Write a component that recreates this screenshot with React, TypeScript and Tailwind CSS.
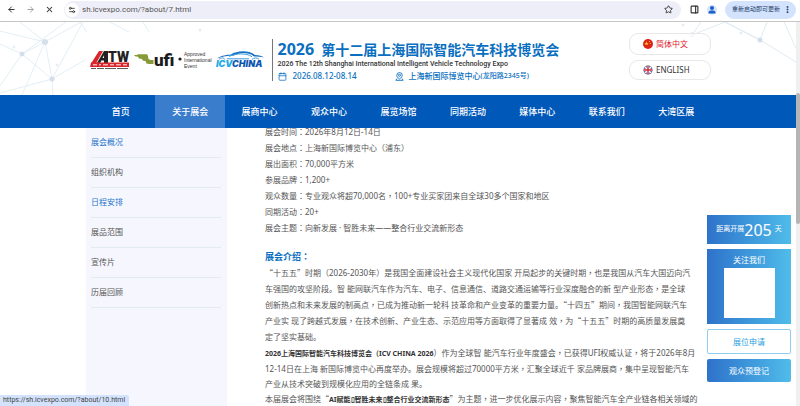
import { ArrowLeft, ArrowRight, Calendar, EllipsisVertical, PanelRight, Settings2, Star, X } from "lucide-react";

const NAV = [
  "首页",
  "关于展会",
  "展商中心",
  "观众中心",
  "展览场馆",
  "同期活动",
  "媒体中心",
  "联系我们",
  "大湾区展",
];

const SIDE = [
  { label: "展会概况", active: true },
  { label: "组织机构", active: false },
  { label: "日程安排", active: true },
  { label: "展品范围", active: false },
  { label: "宣传片", active: false },
  { label: "历届回顾", active: false },
];

const FACTS = [
  "展会时间：2026年8月12日-14日",
  "展会地点：上海新国际博览中心（浦东）",
  "展出面积：70,000平方米",
  "参展品牌：1,200+",
  "观众数量：专业观众将超70,000名，100+专业买家团来自全球30多个国家和地区",
  "同期活动：20+",
  "展会主题：向新发展 · 智胜未来——整合行业交流新形态",
];

const INTRO = [
  "“十五五”时期（2026-2030年）是我国全面建设社会主义现代化国家 开局起步的关键时期，也是我国从汽车大国迈向汽",
  "车强国的攻坚阶段。智 能网联汽车作为汽车、电子、信息通信、道路交通运输等行业深度融合的新 型产业形态，是全球",
  "创新热点和未来发展的制高点，已成为推动新一轮科 技革命和产业变革的重要力量。“十四五”期间，我国智能网联汽车",
  "产业实 现了跨越式发展，在技术创新、产业生态、示范应用等方面取得了显著成 效，为“十五五”时期的高质量发展奠",
  "定了坚实基础。",
];

// Full-width quotes, and colons and commas centred in their cell
function Cjk({ text }: { text: string }) {
  return text.split(/([“”：，])/).map((part, i) => {
    if (part === "“" || part === "”") {
      return <span key={i} className="font-['Noto_Sans_CJK_SC',sans-serif]">{part}</span>;
    }
    if (part === "：" || part === "，") {
      return <span key={i} lang="zh-TW" className="font-['Noto_Sans_CJK_TC',sans-serif]">{part}</span>;
    }
    return part;
  });
}

function BrowserBar() {
  return (
    <div className="flex h-[22px] shrink-0 items-center border-b border-[#c6c6c6] bg-white pb-0.5 text-[#333]">
      <div className="flex w-[64px] items-center justify-between pr-[10px] pl-[7px]">
        <button aria-label="Back"><ArrowLeft size={9} strokeWidth={2.6} /></button>
        <button aria-label="Forward" className="text-[#999]"><ArrowRight size={9} strokeWidth={2.4} /></button>
        <button aria-label="Stop"><X size={9} strokeWidth={2.8} /></button>
      </div>
      <div className="flex h-[18px] flex-1 items-center rounded-full bg-[#eeeef8] pr-2 pl-px">
        <span className="flex size-[14px] items-center justify-center rounded-full bg-white">
          <Settings2 size={8} strokeWidth={2.6} />
        </span>
        <input
          aria-label="Address"
          defaultValue="sh.icvexpo.com/?about/7.html"
          className="ml-[3px] min-w-0 flex-1 bg-transparent font-[Roboto] text-[8px] text-[#555] outline-none"
        />
        <button aria-label="Bookmark"><Star size={9} strokeWidth={2.4} /></button>
      </div>
      <div className="flex items-center gap-2 pr-1 pl-[9px]">
        <button aria-label="Side panel"><PanelRight size={9} strokeWidth={3} /></button>
        <button aria-label="Profile" className="flex size-[10px] items-center justify-center rounded-full bg-[#d3e3fd]">
          <svg viewBox="0 0 10 10" className="size-[10px]" fill="#1a5fc8">
            <circle cx="5" cy="3" r="2" />
            <path d="M1.5 8.5V7.4C1.5 5.8 3.6 5.5 5 5.5s3.5.3 3.5 1.9v1.1z" />
          </svg>
        </button>
        <button className="flex h-[18px] items-center gap-[3px] rounded-full bg-[#d3e3fd] pr-1 pl-[7px] text-[6px] whitespace-nowrap text-[#223b66]">
          重新启动即可更新
          <EllipsisVertical size={9} strokeWidth={3} />
        </button>
      </div>
    </div>
  );
}

function AtwLogo() {
  return (
    <svg viewBox="0 0 40 20" className="h-[20px] w-[40px] shrink-0 overflow-visible">
      <path d="M1 13.500 9 1h4L6 13.500z" fill="#d8262c" />
      <path d="M7 13 14 1h4v12h-4v-2.500h-2.500L10 13zM12.500 8H14V5.200z" fill="#222" fillRule="evenodd" />
      <text x="18" y="11.500" fontSize="14" fontWeight="900" fill="#222" fontFamily="Roboto, sans-serif">TW</text>
      <path d="M1 12.500h38v4.500H0z" fill="#d8262c" />
      <path d="M3 14.800h4m2 0h2m2 0h5m2 0h4m2 0h5m2 0h4" stroke="#fff" strokeOpacity=".65" strokeWidth="1.500" />
      <path d="M1 18.500h5m1 0h7m1 0h11m1 0h11" stroke="#333" strokeWidth="1.200" strokeOpacity=".8" />
    </svg>
  );
}

function UfiLogo() {
  return (
    <div className="flex shrink-0 items-center">
      <svg viewBox="0 0 50 26" className="h-[26px] w-[50px] overflow-visible">
        <path d="M0 8h3l1-.8h9l.8 1.400.7 3.400 2 1h3v4h-4.300l-2.700-.6-1-2.400-2.500-.3-1-1.700-3-.4-1-1.800-3-.5z" fill="#869a3a" />
        <text x="20" y="19" fontSize="17" fontWeight="900" fill="#1b1b1b" fontFamily="Roboto, sans-serif">ufi</text>
        <circle cx="46" cy="12" r="1.600" fill="#1b1b1b" />
      </svg>
      <p className="font-['Liberation_Sans'] text-[5px] leading-[6px] text-[#333]">
        Approved
        <br />
        International
        <br />
        Event
      </p>
    </div>
  );
}

function IcvLogo() {
  return (
    <svg viewBox="0 0 50 20" className="h-[20px] w-[50px] shrink-0 overflow-visible">
      <path d="M1 8.500C6 5 11 5 15 4.500 20 1 32-.5 39 5c4 .4 7 1 9 2.500-3-.9-7-1-10-1C32 1.800 23 2.500 18 5.600 12 6 6 6.500 1 8.500z" fill="#1670c4" />
      <path d="M13 6.500c5-3 18-4 23 .3M3 9.500c2-2 5-2 6 0M36 9.500c2-2 5-2 7-.3M11 8.800h22" fill="none" stroke="#3d9be0" strokeWidth="1" />
      <text x="0" y="17" fontSize="9" fontWeight="900" fontStyle="italic" fontFamily="Inter, sans-serif">
        <tspan fill="#20a8e8">ICV</tspan>
        <tspan fill="#0d56b0">CHINA</tspan>
      </text>
    </svg>
  );
}

function VenueIcon() {
  return (
    <svg viewBox="0 0 9 9" className="size-[9px]" fill="none" stroke="currentColor" strokeWidth=".9">
      <path d="M4.500 7C2.600 5.700 1.800 4.600 1.800 3.300a2.700 2.700 0 0 1 5.400 0C7.200 4.600 6.400 5.700 4.500 7z" />
      <circle cx="4.500" cy="3.300" r="1" />
      <path d="M2 6.500.9 8.300h7.200L7 6.500" />
    </svg>
  );
}

function Mesh() {
  return (
    <>
      <svg viewBox="0 0 210 73" className="absolute top-0 left-0 h-[73px] w-[210px]" fill="none">
        <path
          d="M0 9 45 20 22 32 0 22M20 0l25 20L81 0M45 20l7 37L22 32 0 64M45 20 22 73M22 32 66 0M52 57l31-57M52 57l33-19M52 57 0 71M52 57l1 16M80 0l7 10M110 0l19 10M143 0l6 10"
          stroke="#dcebf2"
          strokeWidth=".8"
        />
        <g fill="#d5dfec">
          <circle cx="45" cy="20" r="3" />
          <circle cx="22" cy="32" r="2.500" />
          <circle cx="52" cy="57" r="2.500" />
          <circle cx="200" cy="8" r="1.500" opacity=".6" />
          <circle cx="14" cy="25" r="1.500" opacity=".5" />
          <circle cx="57" cy="43" r="1.500" opacity=".5" />
        </g>
      </svg>
      <svg viewBox="0 0 116 73" className="absolute top-0 right-0 h-[73px] w-[116px]" fill="none">
        <path d="M12 13 21 0M12 13 45 0l35 18 36 22M80 18l7-18M104 0l12 26M80 18 45 0" stroke="#dbe9ef" strokeWidth=".9" />
        <g fill="#d3deea">
          <circle cx="12" cy="13" r="2.500" />
          <circle cx="80" cy="18" r="2.500" />
          <circle cx="3" cy="3" r="1.500" opacity=".6" />
          <circle cx="61" cy="11" r="1.500" opacity=".6" />
        </g>
      </svg>
    </>
  );
}

function SiteHeader() {
  return (
    <header className="relative h-[73px] shrink-0 bg-white">
      <Mesh />
      <div className="relative flex pr-[85px] pl-[90px]">
        <div className="flex h-[76px] items-center gap-1">
          <AtwLogo />
          <UfiLogo />
          <IcvLogo />
        </div>
        <div className="mt-[17px] ml-[6px] h-[42px] border-l border-[#777] pl-[5px] whitespace-nowrap text-[#0a6fc0]">
          <h1 className="flex items-baseline gap-[7px] text-[14px] leading-[20px] font-bold">
            <span className="text-[16px]">2026</span>
            <span>第十二届上海国际智能汽车科技博览会</span>
          </h1>
          <p className="font-[Roboto] text-[7px] leading-[8px] font-medium text-[#333]">
            2026 The 12th Shanghai International Intelligent Vehicle Technology Expo
          </p>
          <div className="flex items-center text-[8px] leading-[16px] font-medium">
            <Calendar size={9} strokeWidth={2} />
            <span className="ml-[6px]">2026.08.12-08.14</span>
            <span className="ml-[38px]"><VenueIcon /></span>
            <span className="ml-[5px]">上海新国际博览中心</span>
            <span className="text-[7px]">(龙阳路2345号)</span>
          </div>
        </div>
        <div className="mt-[11px] ml-auto flex w-[82px] flex-col gap-[5px] text-[8px]">
          <button className="flex h-[22px] items-center gap-[3px] rounded-[9px] border border-[#e8e8e8] bg-white/80 pl-[13px] text-[#e0202a]">
            <svg viewBox="0 0 10 10" className="size-[10px]">
              <circle cx="5" cy="5" r="5" fill="#dc2418" />
              <path d="m3.500 2.600.6 1.300 1.400.1-1 .9.300 1.400-1.300-.7-1.200.7.200-1.400-1-.9 1.400-.1z" fill="#f9c52a" />
              <circle cx="6.500" cy="2.500" r=".6" fill="#f9c52a" />
              <circle cx="7.300" cy="4.500" r=".6" fill="#f9c52a" />
            </svg>
            简体中文
          </button>
          <button className="flex h-[20px] items-center gap-[3px] rounded-[9px] border border-[#e8e8e8] bg-white/80 pl-[13px] text-[#333]">
            <svg viewBox="0 0 10 10" className="size-[10px]">
              <circle cx="5" cy="5" r="4.500" fill="#31508f" />
              <path d="m2 2 6 6M8 2 2 8" stroke="#fff" strokeWidth="1.200" />
              <path d="M5 .5v9M.5 5h9" stroke="#fff" strokeWidth="2.600" />
              <path d="M5 .5v9M.5 5h9" stroke="#d0273a" strokeWidth="1.400" />
            </svg>
            ENGLISH
          </button>
        </div>
      </div>
    </header>
  );
}

function FloatPanel() {
  return (
    <aside className="absolute top-[87px] right-[5px] flex w-[84px] flex-col gap-[5px] text-center text-white">
      <p className="flex h-[29px] items-center justify-center bg-linear-to-r from-[#2f72ca] to-[#50bcea] text-[7px]">
        距离开展<span className="text-[16px]">205</span>
        <span className="ml-[3px]">天</span>
      </p>
      <div className="h-[75px] bg-linear-to-r from-[#2f72ca] to-[#50bcea] pt-[3px] text-[8px] leading-[16px]">
        关注我们
        <div className="mx-auto h-[50px] w-[51px] bg-white" />
      </div>
      <a href="#booth" className="h-[25px] rounded-[2px] border border-[#8ccdf0] bg-white text-[8px] leading-[23px] text-[#2a9fdc]">
        展位申请
      </a>
      <a href="#register" className="h-[23px] rounded-[2px] bg-linear-to-r from-[#2f72ca] to-[#50bcea] text-[8px] leading-[23px]">
        观众预登记
      </a>
    </aside>
  );
}

export default function App() {
  return (
    <div className="relative flex h-screen flex-col overflow-hidden bg-white font-['Noto_Sans','Noto_Sans_CJK_SC',sans-serif]">
      <BrowserBar />
      <div className="flex min-h-0 flex-1">
        <div className="flex min-w-0 flex-1 flex-col">
          <SiteHeader />
          <nav className="shrink-0 bg-[#0058b8] pr-[85px] pl-[86px]">
            <ul className="flex text-center text-[9px] leading-[33px] font-medium text-white">
              {NAV.map((label) => (
                <li key={label} className={label === "关于展会" ? "flex-1 bg-[#3b7dcd]" : "flex-1"}>
                  <a href="#nav" className="block">{label}</a>
                </li>
              ))}
            </ul>
          </nav>

          <div className="relative flex min-h-0 flex-1 pl-[86px] text-[8px] text-[#555]">
            <ul className="w-[141px] shrink-0 bg-[#f6f7fe] pr-[6px] pl-[5px]">
              {SIDE.map(({ label, active }) => (
                <li key={label} className="h-[30px] border-b border-[#e3ecec] leading-[28px]">
                  <a href="#side" className={active ? "block text-[#2374cc]" : "block"}>
                    {label}
                  </a>
                </li>
              ))}
            </ul>

            <main className="min-w-0 flex-1 pl-[38px] leading-[16px] whitespace-nowrap">
              <div className="-mt-1">
                {FACTS.map((line) => (
                  <p key={line}><Cjk text={line} /></p>
                ))}
              </div>
              <h2 className="mt-[13px] text-[9px] font-bold text-[#0a6fc0]"><Cjk text="展会介绍：" /></h2>
              {INTRO.map((line) => (
                <p key={line}><Cjk text={line} /></p>
              ))}
              <div className="leading-[15px]">
                <p>
                  <b className="text-[7px] text-[#333]">2026上海国际智能汽车科技博览会（ICV CHINA 2026</b>
                  <Cjk text="）作为全球智 能汽车行业年度盛会，已获得UFI权威认证，将于2026年8月" />
                </p>
                <p>
                  <Cjk text="12-14日在上海 新国际博览中心再度举办。展会规模将超过70000平方米，汇聚全球近千 家品牌展商，集中呈现智能汽车" />
                </p>
                <p>产业从技术突破到规模化应用的全链条成 果。</p>
                <p>
                  <Cjk text="本届展会将围绕“" />
                  <b className="text-[7px] text-[#333]">AI赋能▯智胜未来▯整合行业交流新形态</b>
                  <Cjk text="”为主题，进一步优化展示内容，聚焦智能汽车全产业链各相关领域的" />
                </p>
              </div>
            </main>
            <FloatPanel />
          </div>
        </div>

        {/* Scrollbar track */}
        <div className="w-1 shrink-0 bg-[#f0f0f0] pt-[71px]">
          <div className="h-[131px] rounded-full bg-[#b5b5b5]" />
        </div>
      </div>

      <div className="absolute bottom-0 left-0 rounded-tr-[2px] bg-[#d3e3fd] pr-1 pl-[3px] font-[Roboto] text-[7px] leading-[11px] text-[#444]">
        https://sh.icvexpo.com/?about/10.html
      </div>
    </div>
  );
}
